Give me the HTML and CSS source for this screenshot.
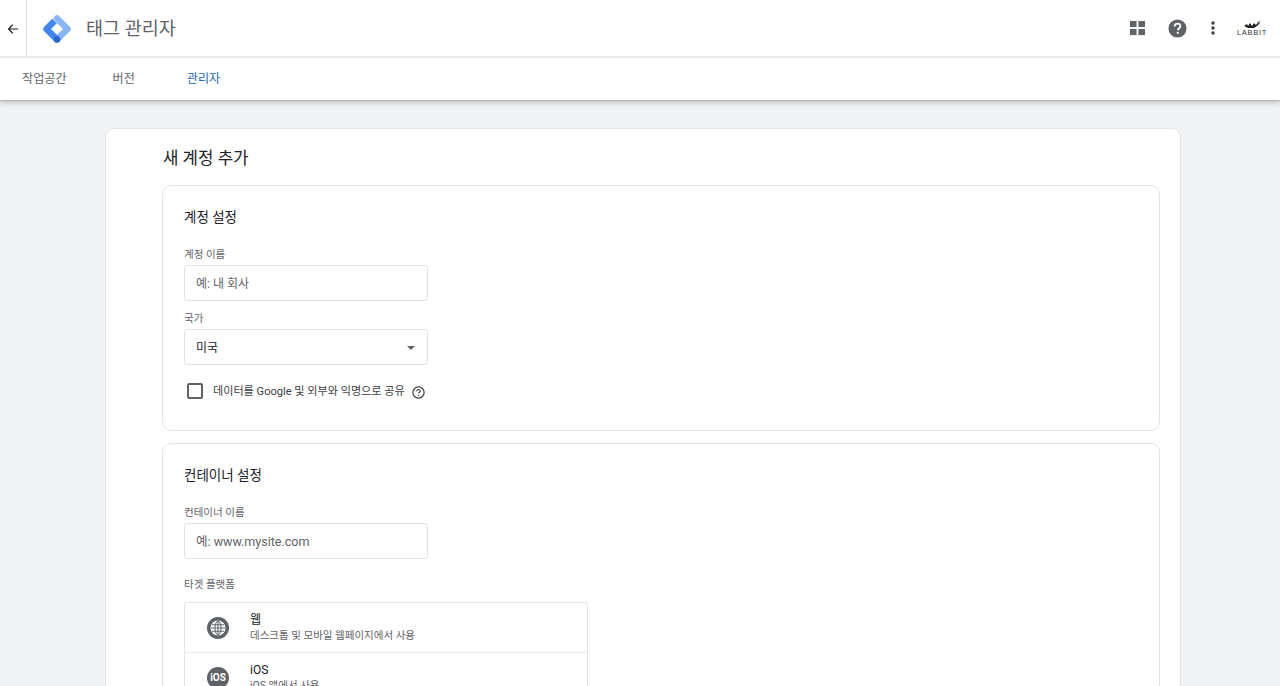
FILE: index.html
```html
<!DOCTYPE html>
<html lang="ko">
<head>
<meta charset="utf-8">
<title>태그 관리자</title>
<link rel="stylesheet" href="styles.css">
</head>
<body>
<header class="top">
  <div class="appbar">
    <div class="back">
      <svg class="back-icon" width="14" height="14" viewBox="0 0 24 24"><path d="M21 11H6.800l5.600-5.600L11 4l-8 8 8 8 1.400-1.400L6.800 13H21z" fill="#202124"/></svg>
    </div>
    <svg class="logo" width="28" height="28" viewBox="0 0 28 28">
      <path d="M14 3.500 24.500 14 14 24.500" fill="none" stroke="#8ab4f8" stroke-width="6.500" stroke-linecap="round" stroke-linejoin="round"/>
      <path d="M11.500 6 3.500 14 14 24.500" fill="none" stroke="#4285f4" stroke-width="6.500" stroke-linejoin="round"/>
      <circle cx="14" cy="24.500" r="3.250" fill="#2a66c9"/>
    </svg>
    <div class="brand">태그 관리자</div>
    <div class="actions">
      <svg class="a-grid" width="15" height="15" viewBox="0 0 16 16" fill="#5f6368"><rect width="7" height="6.500"/><rect x="9" width="7" height="6.500"/><rect y="8.500" width="7" height="6.500"/><rect x="9" y="8.500" width="7" height="6.500"/></svg>
      <svg class="a-help" width="19" height="19" viewBox="0 0 20 20"><circle cx="10" cy="10" r="9.500" fill="#5f6368"/><path d="M7 7.800C7 6 8.300 4.900 10 4.900s3 1.100 3 2.700c0 2.100-2.600 2.200-2.600 4.300" fill="none" stroke="#fff" stroke-width="1.900"/><circle cx="10.300" cy="14.600" r="1.200" fill="#fff"/></svg>
      <svg class="a-more" width="4" height="14" viewBox="0 0 4 14" fill="#3c4043"><circle cx="2" cy="2" r="1.700"/><circle cx="2" cy="7" r="1.700"/><circle cx="2" cy="12" r="1.700"/></svg>
      <div class="avatar">
        <svg width="20" height="9" viewBox="0 0 20 9"><path d="M2 6l3-2 1 2 2-3 2 3 2-3 2 2 3-4 1 2-3 3-3 2H6z" fill="#222"/><path d="M15 2l3-1-1 3z" fill="#999"/></svg>
        <span class="avatar-name">LABBIT</span>
      </div>
    </div>
  </div>
  <nav class="tabs">
    <a class="tab">작업공간</a>
    <a class="tab">버전</a>
    <a class="tab active">관리자</a>
  </nav>
</header>
<main class="page">
  <section class="sheet">
    <h1 class="title">새 계정 추가</h1>
    <div class="panel panel-account">
      <h2 class="panel-title">계정 설정</h2>
      <label class="label">계정 이름</label>
      <div class="field placeholder">예: 내 회사</div>
      <label class="label label-next">국가</label>
      <div class="field select">
        <span>미국</span>
        <svg width="8" height="4" viewBox="0 0 10 5"><path d="M0 0h10L5 5z" fill="#5f6368"/></svg>
      </div>
      <div class="check-row">
        <span class="checkbox"></span>
        <span class="check-text">데이터를 Google 및 외부와 익명으로 공유</span>
        <svg class="check-help" width="13" height="13" viewBox="0 0 13 13"><circle cx="6.500" cy="6.500" r="5.600" fill="none" stroke="#3c4043" stroke-width="1.200"/><path d="M4.700 5.200c0-1 .8-1.700 1.800-1.700s1.800.6 1.800 1.500c0 1.200-1.600 1.300-1.600 2.600" fill="none" stroke="#3c4043" stroke-width="1.100"/><circle cx="6.700" cy="9.600" r=".7" fill="#3c4043"/></svg>
      </div>
    </div>
    <div class="panel panel-container">
      <h2 class="panel-title">컨테이너 설정</h2>
      <label class="label">컨테이너 이름</label>
      <div class="field placeholder latin">예: www.mysite.com</div>
      <label class="label label-platform">타겟 플랫폼</label>
      <div class="platforms">
        <div class="platform">
          <svg class="p-icon" width="22" height="22" viewBox="0 0 22 22"><circle cx="11" cy="11" r="11" fill="#5f6368"/><circle cx="11" cy="11" r="7.500" fill="#fff"/><g fill="none" stroke="#5f6368" stroke-width="1"><ellipse cx="11" cy="11" rx="3" ry="7"/><path d="M4 11h14M5 7.800h12M5 14.200h12M11 4v14"/></g></svg>
          <div class="p-text">
            <div class="p-name">웹</div>
            <div class="p-desc">데스크톱 및 모바일 웹페이지에서 사용</div>
          </div>
        </div>
        <div class="platform">
          <div class="p-badge">iOS</div>
          <div class="p-text">
            <div class="p-name">iOS</div>
            <div class="p-desc">iOS 앱에서 사용</div>
          </div>
        </div>
      </div>
    </div>
  </section>
</main>
</body>
</html>
```
FILE: styles.css
```css
* { box-sizing: border-box; }
html, body { margin: 0; height: 100%; overflow: hidden; }
body {
  background: #f1f3f4;
  color: #202124;
  font-family: Roboto, "Noto Sans CJK KR", "Noto Sans", sans-serif;
}
.top {
  position: relative;
  z-index: 1;
  background: #fff;
  height: 101px;
  border-bottom: 1px solid #b5b7b8;
  box-shadow: 0 1px 6px rgba(60, 64, 67, .35);
}
.appbar {
  height: 58px;
  display: flex;
  align-items: center;
  border-bottom: 2px solid #e8eaed;
}
.back {
  width: 27px;
  height: 56px;
  display: flex;
  align-items: center;
  justify-content: center;
  border-right: 1px solid #e0e0e0;
}
.back-icon { margin-top: 2px; }
.logo { margin: 1px 0 0 16px; }
.brand {
  margin: 1px 0 0 15px;
  font-size: 18.500px;
  color: #5f6368;
  line-height: 28px;
}
.actions {
  margin-left: auto;
  display: flex;
  align-items: center;
}
.a-grid { margin-top: 1px; }
.a-help { margin-left: 23px; }
.a-more { margin-left: 24px; }
.avatar {
  margin-left: 22px;
  margin-right: 13px;
  width: 30px;
  display: flex;
  flex-direction: column;
  align-items: center;
}
.avatar-name {
  font-size: 7.500px;
  line-height: 8px;
  letter-spacing: .7px;
  color: #333;
  font-family: "Liberation Sans", sans-serif;
}
.tabs {
  height: 42px;
  display: flex;
  align-items: center;
  padding: 0 0 1px 22px;
  gap: 46px;
}
.tab { font-size: 12.100px; color: #5f6368; line-height: 16px; }
.tab.active { color: #1967b8; margin-left: 6px; }
.page { padding: 27px 99px 0 105px; }
.sheet {
  background: #fff;
  border: 1px solid #e3e5e7;
  border-radius: 9px 9px 0 0;
  padding: 17px 20px 0 56px;
  height: 600px;
}
.title {
  margin: 0 0 15px 1px;
  font-size: 16.800px;
  font-weight: 400;
  line-height: 24px;
  color: #202124;
}
.panel {
  border: 1px solid #e3e5e7;
  border-radius: 9px;
  padding: 21px 21px 0;
  margin-bottom: 12px;
}
.panel-account { height: 246px; }
.panel-container { height: 300px; }
.panel-title {
  margin: 0 0 21px;
  font-size: 13.500px;
  font-weight: 400;
  line-height: 20px;
  color: #202124;
}
.label {
  display: block;
  font-size: 10.500px;
  line-height: 14px;
  color: #5f6368;
  margin-bottom: 3px;
}
.label-next { margin-top: 11px; }
.label-platform { margin-top: 19px; margin-bottom: 10px; }
.field {
  width: 244px;
  height: 36px;
  border: 1px solid #dfe1e5;
  border-radius: 3px;
  padding: 0 11px 2px;
  display: flex;
  align-items: center;
  font-size: 12px;
}
.latin { font-size: 12.500px; }
.placeholder { color: #5f6368; }
.select { justify-content: space-between; color: #202124; }
.select svg { margin: 3px 1px 0 0; }
.check-row {
  display: flex;
  align-items: center;
  margin-top: 16px;
  padding-left: 3px;
}
.checkbox {
  width: 16px;
  height: 16px;
  margin-top: -2px;
  border: 2px solid #5f6368;
  border-radius: 2px;
}
.check-text {
  margin: 1px 0 0 10px;
  font-size: 11.100px;
  line-height: 20px;
  color: #3c4043;
}
.check-help { margin-left: 7px; margin-top: 2px; }
.platforms {
  width: 404px;
  border: 1px solid #e3e5e7;
  border-radius: 3px;
}
.platform {
  height: 50px;
  display: flex;
  align-items: center;
  border-bottom: 1px solid #e8eaed;
  padding-left: 22px;
}
.p-icon { flex: none; }
.p-badge {
  flex: none;
  width: 22px;
  height: 22px;
  border-radius: 50%;
  background: #5f6368;
  color: #fff;
  font-size: 10px;
  font-weight: 700;
  line-height: 22px;
  text-align: center;
}
.p-text { margin-left: 21px; }
.p-name { font-size: 12px; line-height: 16px; color: #202124; }
.p-desc { font-size: 10.500px; line-height: 16px; color: #5f6368; }
```
